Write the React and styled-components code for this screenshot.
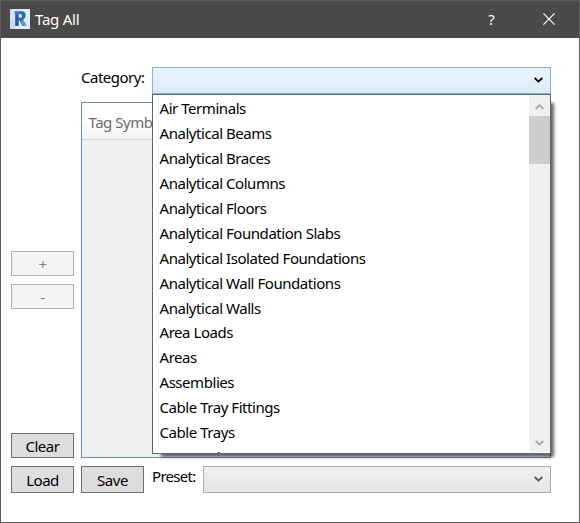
import React from "react";
import styled, { createGlobalStyle } from "styled-components";

const GlobalStyle = createGlobalStyle`
  * { box-sizing: border-box; }
  body { margin: 0; background: #fff; font-family: "Noto Sans", "Open Sans", sans-serif; font-size: 15px; }
`;

const Window = styled.div`
  width: 580px;
  height: 523px;
  display: flex;
  flex-direction: column;
  background: #fff;
  border: 1px solid #5c5c5c;
  color: #000;
  overflow: hidden;
`;

const TitleBar = styled.header`
  flex: 0 0 37px;
  display: flex;
  align-items: center;
  padding: 0 2px 1px 9px;
  background: #4c4a48;
  color: #fff;
`;

const Label = styled.span`
  display: block;
  white-space: nowrap;
  line-height: 20px;
  letter-spacing: ${(p) => p.$spacing ?? -0.48}px;
`;

const Title = styled(Label)`
  flex: 1;
  margin-left: 5px;
`;

const CaptionButton = styled.button`
  width: 57px;
  height: 36px;
  padding: 0;
  border: 0;
  background: none;
  color: #fff;
  font: inherit;
  display: flex;
  align-items: center;
  justify-content: center;
`;

const Content = styled.main`
  flex: 1;
  display: grid;
  grid-template-columns: 63px 470px;
  grid-template-rows: 27px 356px 27px;
  column-gap: 7px;
  row-gap: 8px;
  padding: 29px 0 0 10px;
`;

const FieldRow = styled.div`
  grid-column: 2;
  display: grid;
  grid-template-columns: ${(p) => p.$columns};
`;

const Combo = styled.div`
  position: relative;
  display: flex;
  align-items: center;
  justify-content: flex-end;
  padding: 0 7px 2px 0;
  border: 1px solid ${(p) => (p.$open ? "#7eb4ea" : "#acacac")};
  background: ${(p) =>
    p.$open
      ? "linear-gradient(#ebf4fc, #dcecfc)"
      : "linear-gradient(#f0f0f0, #e5e5e5)"};
`;

const Popup = styled.div`
  position: absolute;
  z-index: 2;
  top: 26px;
  left: -1px;
  width: 399px;
  height: 360px;
  display: flex;
  background: #fff;
  border: 1px solid #646464;
  box-shadow: 6px 6px 3px -3px rgba(0, 0, 0, 0.6);
`;

const OptionList = styled.ul`
  flex: 1;
  margin: 0;
  padding: 1px 0 0 6.5px;
  list-style: none;
  overflow: hidden;
`;

const Option = styled.li`
  height: 24.95px;
  line-height: 25px;
  white-space: nowrap;
  letter-spacing: -0.45px;
`;

const ScrollBar = styled.div`
  width: 21px;
  margin-bottom: 1px;
  display: flex;
  flex-direction: column;
  background: #f0f0f0;
`;

const ScrollArrow = styled.div`
  height: 21px;
  display: flex;
  align-items: center;
  justify-content: center;
  padding-top: ${(p) => p.$shift ?? 0}px;
  padding-right: 1px;
`;

const ScrollThumb = styled.div`
  height: 48px;
  margin-bottom: auto;
  background: #cdcdcd;
`;

const SideButtons = styled.div`
  grid-column: 1;
  grid-row: 2;
  display: flex;
  flex-direction: column;
  justify-content: flex-end;
  gap: 8px;
`;

const Button = styled.button`
  width: 63px;
  height: ${(p) => p.$height ?? 25}px;
  margin: 0 0 ${(p) => p.$gapBelow ?? 0}px;
  padding: 1px 0 0;
  border: 1px solid ${(p) => (p.disabled ? "#adb2b5" : "#707070")};
  background: ${(p) => (p.disabled ? "#f4f4f4" : "#ddd")};
  color: ${(p) => (p.disabled ? "#838383" : "#000")};
  font: inherit;
  line-height: 20px;
  letter-spacing: -0.48px;
`;

const Table = styled.section`
  grid-column: 2;
  grid-row: 2;
  border: 1px solid #688caf;
  background: #f0f0f0;
`;

const TableHeader = styled.div`
  height: 37px;
  padding: 9px 0 0 6.5px;
  border-bottom: 1px solid #d5d5d5;
  background: linear-gradient(#fff 0%, #fff 40%, #f2f3f5 100%);
  color: #6d6d6d;
`;

const Chevron = ({ up, color = "#000", width = 9, stroke = 1.8 }) => (
  <svg width={width} height="6" viewBox="0 0 9 6" fill="none" preserveAspectRatio="none">
    <path
      d={up ? "M.7 5L4.5 1.2 8.3 5" : "M.7 1L4.5 4.6 8.3 1"}
      stroke={color}
      strokeWidth={stroke}
    />
  </svg>
);

const RevitIcon = () => (
  <svg width="20" height="20" viewBox="0 0 20 20">
    <defs>
      <linearGradient id="tile" x1="0" y1="0" x2="1" y2="1">
        <stop offset="0" stopColor="#c8dbef" />
        <stop offset=".5" stopColor="#e3edf8" />
        <stop offset="1" stopColor="#dceafa" />
      </linearGradient>
      <linearGradient id="letter" x1="0" y1="0" x2="1" y2="1">
        <stop offset="0" stopColor="#3f82c5" />
        <stop offset=".55" stopColor="#2765ac" />
        <stop offset="1" stopColor="#65a0ce" />
      </linearGradient>
    </defs>
    <rect width="20" height="20" fill="url(#tile)" />
    <path d="M0 11L5 9V20H0Z" fill="#bfd5e9" opacity=".7" />
    <path
      fill="url(#letter)"
      fillRule="evenodd"
      d="M4.6 2.3H11.5Q15.6 2.3 15.6 6.6Q15.6 9.4 13.2 10.6L17 17H12.4L9.4 11.3H8.5V17H5.3V5.3L4.6 4.6ZM8.5 5V8.8H10.3Q12 8.8 12 6.9Q12 5 10.3 5Z"
    />
    <path d="M5.3 4.6L8.5 5.3V17H5.3Z" fill="#24558f" opacity=".65" />
    <path d="M11 13L15 17H17L13 10.6Z" fill="#8dbbd9" opacity=".55" />
  </svg>
);

const CloseIcon = () => (
  <svg width="12" height="12" viewBox="0 0 12 12" fill="none" stroke="#fff" strokeWidth="1.2">
    <path d="M.4.4L11.6 11.6M11.6.4L.4 11.6" />
  </svg>
);

const categories = [
  "Air Terminals",
  "Analytical Beams",
  "Analytical Braces",
  "Analytical Columns",
  "Analytical Floors",
  "Analytical Foundation Slabs",
  "Analytical Isolated Foundations",
  "Analytical Wall Foundations",
  "Analytical Walls",
  "Area Loads",
  "Areas",
  "Assemblies",
  "Cable Tray Fittings",
  "Cable Trays",
  "Casework",
];

export default function App() {
  return (
    <>
      <GlobalStyle />
      <Window>
        <TitleBar>
          <RevitIcon />
          <Title $spacing={-0.25}>Tag All</Title>
          <CaptionButton aria-label="Help">?</CaptionButton>
          <CaptionButton aria-label="Close">
            <CloseIcon />
          </CaptionButton>
        </TitleBar>
        <Content>
          <FieldRow $columns="71px 399px">
            <Label $spacing={-0.5}>Category:</Label>
            <Combo $open>
              <Chevron />
              <Popup>
                <OptionList>
                  {categories.map((name) => (
                    <Option key={name}>{name}</Option>
                  ))}
                </OptionList>
                <ScrollBar>
                  <ScrollArrow $shift={2}>
                    <Chevron up color="#a3a3a3" />
                  </ScrollArrow>
                  <ScrollThumb />
                  <ScrollArrow $shift={2}>
                    <Chevron color="#a3a3a3" />
                  </ScrollArrow>
                </ScrollBar>
              </Popup>
            </Combo>
          </FieldRow>
          <SideButtons>
            <Button disabled>+</Button>
            <Button disabled $gapBelow={116}>-</Button>
            <Button>Clear</Button>
          </SideButtons>
          <Table>
            <TableHeader>
              <Label>Tag Symbol</Label>
            </TableHeader>
          </Table>
          <Button $height={27}>Load</Button>
          <FieldRow $columns="71px 51px 348px">
            <Button $height={27}>Save</Button>
            <Label $spacing={-0.7}>Preset:</Label>
            <Combo>
              <Chevron color="#555" />
            </Combo>
          </FieldRow>
        </Content>
      </Window>
    </>
  );
}
